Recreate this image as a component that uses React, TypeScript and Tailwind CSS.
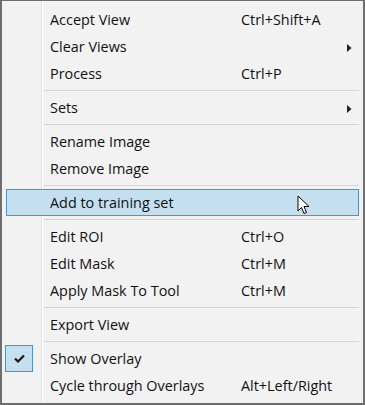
type Item =
  | { kind: "sep" }
  | {
      kind: "item";
      label: string;
      shortcut?: string;
      submenu?: boolean;
      active?: boolean;
      checked?: boolean;
    };

const items: Item[] = [
  { kind: "item", label: "Accept View", shortcut: "Ctrl+Shift+A" },
  { kind: "item", label: "Clear Views", submenu: true },
  { kind: "item", label: "Process", shortcut: "Ctrl+P" },
  { kind: "sep" },
  { kind: "item", label: "Sets", submenu: true },
  { kind: "sep" },
  { kind: "item", label: "Rename Image" },
  { kind: "item", label: "Remove Image" },
  { kind: "sep" },
  { kind: "item", label: "Add to training set", active: true },
  { kind: "sep" },
  { kind: "item", label: "Edit ROI", shortcut: "Ctrl+O" },
  { kind: "item", label: "Edit Mask", shortcut: "Ctrl+M" },
  { kind: "item", label: "Apply Mask To Tool", shortcut: "Ctrl+M" },
  { kind: "sep" },
  { kind: "item", label: "Export View" },
  { kind: "sep" },
  { kind: "item", label: "Show Overlay", checked: true },
  { kind: "item", label: "Cycle through Overlays", shortcut: "Alt+Left/Right" },
];

function Cursor() {
  return (
    <svg
      className="absolute left-[290px] top-[5px]"
      width="13"
      height="20"
      viewBox="0 0 13 20"
    >
      <path
        d="M1 1 L1 16 L4.5 12.5 L7 18.5 L9.5 17.5 L7 11.5 L12 11.5 Z"
        fill="#fff"
        stroke="#000"
        strokeWidth="1"
        strokeLinejoin="miter"
      />
    </svg>
  );
}

function Row({ item }: { item: Extract<Item, { kind: "item" }> }) {
  return (
    <div
      className={
        "relative flex h-[27px] items-center border " +
        (item.active
          ? "border-[#3a9ad9] bg-[#c4e0f0]"
          : "border-transparent")
      }
    >
      {item.checked && (
        <div className="absolute left-[-2px] top-[-1px] flex h-[27px] w-[28px] items-center justify-center border border-[#3a9ad9] bg-[#c4e0f0]">
          <svg width="11" height="9" viewBox="0 0 11 9">
            <path
              d="M1 4.5 L4 7.5 L10 1.5"
              fill="none"
              stroke="#1a1a1a"
              strokeWidth="2.2"
            />
          </svg>
        </div>
      )}
      <span className="ml-[43px] w-[191px] whitespace-nowrap">{item.label}</span>
      <span className="whitespace-nowrap">{item.shortcut}</span>
      {item.submenu && (
        <svg
          className="absolute left-[340px] top-[10px]"
          width="5"
          height="8"
          viewBox="0 0 5 8"
        >
          <path d="M0 0 L4.5 4 L0 8 Z" fill="#222" />
        </svg>
      )}
      {item.active && <Cursor />}
    </div>
  );
}

export default function App() {
  return (
    <div className="h-[405px] w-[365px] overflow-hidden bg-white">
      <div
        className="h-full w-full border-t border-l-2 border-r-2 border-b-2 border-[#6e6e6e] bg-[#f2f2f2] bg-[linear-gradient(to_right,transparent_39px,#e3e3e3_39px,#e3e3e3_40px,#ffffff_40px,#ffffff_41px,transparent_41px)] pl-[4px] pr-[4px] pt-[5px] text-[14.4px] text-[#111] [font-family:'Open_Sans','Noto_Sans',sans-serif]"
      >
        {items.map((item, i) =>
          item.kind === "sep" ? (
            <div key={i} className="flex h-[7px] items-center pl-[38px]">
              <div className="h-px w-full bg-[#d5d5d5]" />
            </div>
          ) : (
            <Row key={i} item={item} />
          )
        )}
      </div>
    </div>
  );
}
